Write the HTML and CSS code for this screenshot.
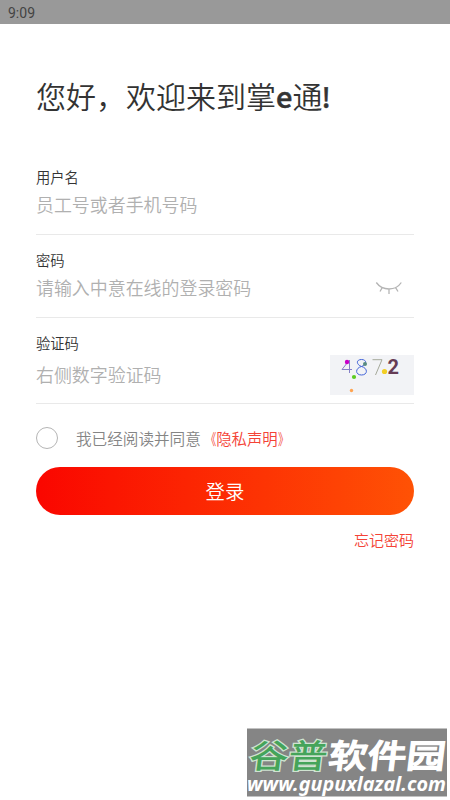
FILE: index.html
```
<!DOCTYPE html>
<html lang="zh-CN">
<head>
<meta charset="utf-8">
<title>登录</title>
<link rel="stylesheet" href="styles.css">
</head>
<body>
<header class="status">9:09</header>
<main class="page">
  <h1 class="title">您好，欢迎来到掌<b>e</b>通<b class="bang">!</b></h1>
  <section class="field">
    <div class="label">用户名</div>
    <div class="row"><span class="hint">员工号或者手机号码</span></div>
  </section>
  <section class="field">
    <div class="label">密码</div>
    <div class="row">
      <span class="hint">请输入中意在线的登录密码</span>
      <svg class="eye" width="28" height="16" viewBox="0 0 28 16" fill="none" stroke="#b4b4b4" stroke-width="1.3"><path d="M1.300 2.500Q6 9 14 9T26.300 2.500M7.500 7.200L5 11.500M14 9V14M20.300 7.200L23 11.500"/></svg>
    </div>
  </section>
  <section class="field captcha-field">
    <div class="label">验证码</div>
    <div class="row">
      <span class="hint">右侧数字验证码</span>
      <svg class="captcha" width="84" height="40" viewBox="0 0 84 40">
        <rect width="84" height="40" fill="#f2f3f6"/>
        <g fill="none" stroke-width="1">
          <path d="M19.500 18V5L12 14.500H22" stroke="#8580c8"/>
          <path d="M31.500 11.500C26 9.500 26 4.500 31.500 4.500S37 9.500 31.500 11.500C25 13 25 20 31.500 20S38 13 31.500 11.500Z" stroke="#4263d8"/>
          <path d="M42.500 4.700H52L45.500 20" stroke="#a5a99a"/>
        </g>
        <text class="digit" x="57.500" y="19">2</text>
        <circle cx="17" cy="7" r="2.200" fill="#c800c8"/>
        <circle cx="35" cy="9" r="2" fill="#598b80"/>
        <circle cx="24" cy="22" r="2.100" fill="#5bcc20"/>
        <circle cx="54.500" cy="16.500" r="2.600" fill="#f2ce24"/>
        <circle cx="21.500" cy="35.500" r="1.700" fill="#ffa451"/>
      </svg>
    </div>
  </section>
  <div class="agree"><i class="check"></i><span>我已经阅读并同意<a class="link"><span class="open">《</span>隐私声明<span class="close">》</span></a></span></div>
  <div class="button">登录</div>
  <a class="forgot">忘记密码</a>
</main>
<svg class="mark" width="201" height="69" viewBox="0 0 201 69">
  <rect y="-.500" width="200" height="68" fill="#858585"/>
  <g transform="translate(0 41) skewX(-7)">
    <text class="mark-green" x="1" y="-2" textLength="78" lengthAdjust="spacingAndGlyphs">谷普</text>
    <text class="mark-white" x="80" y="-2" textLength="117" lengthAdjust="spacingAndGlyphs">软件园</text>
  </g>
  <text class="mark-url" x="0" y="61.500" textLength="199" lengthAdjust="spacingAndGlyphs">www.gupuxlazal.com</text>
</svg>
</body>
</html>
```
FILE: styles.css
```
* { box-sizing: border-box; }
body {
  margin: 0;
  height: 800px;
  overflow: hidden;
  background: #fff;
  color: #333;
  font-family: "Noto Sans CJK SC", sans-serif;
}
.status {
  height: 24px;
  padding-left: 8px;
  background: #999;
  color: #444;
  font: 14px/26px Roboto, sans-serif;
}
.page {
  display: flex;
  flex-direction: column;
  padding: 0 36px;
}
.title {
  margin: 48px 0 0;
  height: 95px;
  font-size: 30px;
  line-height: 46px;
  font-weight: 350;
  white-space: nowrap;
}
.title b { font-weight: 500; font-size: 29px; -webkit-text-stroke: .5px #333; }
.title .bang { font-size: 27px; margin-left: -1px; }
.field {
  height: 83px;
  border-bottom: 1px solid #e9e9e9;
}
.field:first-of-type { height: 68px; }
.field:not(:first-of-type) { padding-top: 15px; }
.label {
  height: 20px;
  font-size: 14.3px;
  line-height: 20px;
  font-weight: 350;
}
.row {
  display: flex;
  align-items: center;
  justify-content: space-between;
  height: 34px;
}
.hint {
  color: #b0b0b0;
  font-size: 17.950px;
  font-weight: 350;
}
.eye { margin: 2px 11px 0 0; }
.field.captcha-field { height: 86px; }
.captcha-field .row { height: 40px; margin-top: 2px; }
.captcha-field .hint { margin-top: -3px; }
.digit { font: 700 20px Roboto, sans-serif; fill: #653c55; }
.agree {
  display: flex;
  align-items: center;
  height: 22px;
  margin-top: 23px;
  font-size: 15.600px;
  font-weight: 350;
  color: #858585;
  white-space: nowrap;
}
.check {
  width: 22px;
  height: 22px;
  margin-right: 18px;
  border: 1.500px solid #b5b5b5;
  border-radius: 50%;
}
.link, .forgot { color: #f44336; }
.link { font-size: 15.400px; }
.open, .close {
  display: inline-block;
  width: 15.400px;
  transform: scaleX(.7);
}
.open { transform-origin: right; }
.close { transform-origin: left; }
.button {
  height: 48px;
  margin-top: 18px;
  border-radius: 24px;
  background: linear-gradient(90deg, #fa0600, #ff5205);
  color: #fff;
  font-size: 19.400px;
  font-weight: 350;
  line-height: 47px;
  text-align: center;
}
.forgot {
  align-self: flex-end;
  margin-top: 14px;
  font-size: 15px;
  font-weight: 350;
  line-height: 22px;
}
.mark {
  position: absolute;
  left: 247px;
  top: 729px;
  overflow: visible;
}
.mark-green, .mark-white {
  font-size: 33px;
  font-weight: 500;
}
.mark-green { fill: #45a45a; stroke: #cfe3d1; stroke-width: 2.500px; paint-order: stroke; }
.mark-white { fill: #fff; stroke: #fff; stroke-width: 1.200px; }
.mark-url {
  font: italic 700 20px "Noto Sans", sans-serif;
  fill: #fff;
}
```
